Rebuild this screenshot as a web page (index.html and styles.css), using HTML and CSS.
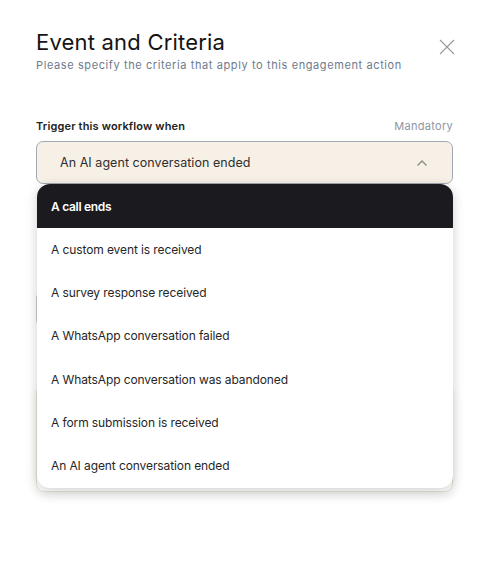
FILE: index.html
```html
<!DOCTYPE html>
<html lang="en">
<head>
  <meta charset="UTF-8" />
  <meta name="viewport" content="width=device-width, initial-scale=1.0"/>
  <title>Event and Criteria</title>
  <link rel="stylesheet" href="styles.css">
</head>
<body>
  <div class="modal">
    <header class="modal-header">
      <div>
        <h1>Event and Criteria</h1>
        <p class="subtitle">Please specify the criteria that apply to this engagement action</p>
      </div>
      <button class="close-btn" aria-label="Close">
        <svg width="16" height="16" viewBox="0 0 16 16" fill="none" stroke="#9a9a9a" stroke-width="1.1">
          <path d="M1 1 L15 15 M15 1 L1 15"/>
        </svg>
      </button>
    </header>

    <div class="field">
      <div class="label-row">
        <span class="label">Trigger this workflow when</span>
        <span class="hint">Mandatory</span>
      </div>
      <div class="select-wrap">
        <div class="select open">
          <span>An AI agent conversation ended</span>
          <svg width="12" height="8" viewBox="0 0 12 8" fill="none" stroke="#8a8a8a" stroke-width="1.3">
            <path d="M1.5 6.5 L6 2 L10.5 6.5"/>
          </svg>
        </div>

        <ul class="dropdown">
          <li class="option active">A call ends</li>
          <li class="option">A custom event is received</li>
          <li class="option">A survey response received</li>
          <li class="option">A WhatsApp conversation failed</li>
          <li class="option">A WhatsApp conversation was abandoned</li>
          <li class="option">A form submission is received</li>
          <li class="option">An AI agent conversation ended</li>
        </ul>
      </div>
    </div>

    <!-- fields under the open dropdown -->
    <div class="input"></div>
    <div class="panel"></div>
  </div>
</body>
</html>
```

FILE: styles.css
```css
:root {
  --text-primary: #141414;
  --text-secondary: #6e7a8c;
  --hint: #8d96a3;
  --beige: #f6f0e6;
  --border: #a3a9b1;
  --dark: #1b1b1f;
}

* {
  margin: 0;
  padding: 0;
  box-sizing: border-box;
}

html, body {
  min-height: 100vh;
}

body {
  font-family: 'Inter', sans-serif;
  background: #ffffff;
  color: var(--text-primary);
}

.modal {
  padding: 29px 41px 72px 36px;
}

.modal-header {
  display: flex;
  justify-content: space-between;
  align-items: flex-start;
}

h1 {
  font-size: 22px;
  font-weight: 400;
  letter-spacing: 0.2px;
  line-height: 26px;
}

.subtitle {
  margin-top: 3px;
  font-size: 11px;
  letter-spacing: 0.6px;
  color: var(--text-secondary);
}

.close-btn {
  background: none;
  border: none;
  margin-top: 10px;
  margin-right: -2px;
  cursor: pointer;
}

.field {
  margin-top: 47px;
}

.label-row {
  display: flex;
  justify-content: space-between;
  align-items: baseline;
  font-size: 11px;
  margin-bottom: 8px;
}

.label {
  font-weight: 600;
  color: #222;
  letter-spacing: 0.15px;
}

.hint {
  color: var(--hint);
  letter-spacing: 0.3px;
}

.select-wrap {
  position: relative;
}

.select {
  height: 43px;
  display: flex;
  align-items: center;
  justify-content: space-between;
  padding: 0 24px 0 23px;
  background: var(--beige);
  border: 1px solid var(--border);
  border-radius: 7px;
  font-size: 12.5px;
  letter-spacing: 0.05px;
  color: #2e2e2e;
}

.dropdown {
  position: absolute;
  top: 43px;
  left: 1px;
  right: 0;
  list-style: none;
  background: #ffffff;
  border-radius: 13px;
  overflow: hidden;
  box-shadow: 0 4px 14px rgba(0, 0, 0, 0.14), 0 0 8px rgba(0, 0, 0, 0.06);
  padding-bottom: 1px;
  z-index: 10;
}

.option {
  height: 43.2px;
  display: flex;
  align-items: center;
  padding-left: 14px;
  font-size: 12px;
  letter-spacing: -0.1px;
  color: #262626;
}

.option.active {
  height: 44px;
  background: var(--dark);
  color: #ffffff;
  font-weight: 600;
  letter-spacing: -0.3px;
}

.input {
  margin-top: 108px;
  height: 34px;
  border: 1px solid #c9ccd1;
  border-radius: 6px;
}

.panel {
  margin-top: 59px;
  height: 107px;
  border: 1px solid #e8e2d2;
  border-radius: 8px;
  box-shadow: 0 4px 10px rgba(0, 0, 0, 0.08);
}
```
